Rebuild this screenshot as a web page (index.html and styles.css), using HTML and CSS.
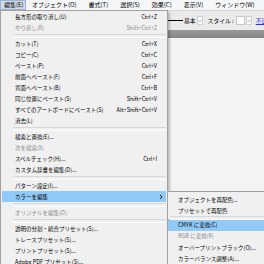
FILE: index.html
```html
<!DOCTYPE html>
<html lang="ja">
<head>
<meta charset="utf-8">
<link rel="stylesheet" href="styles.css">
</head>
<body>
<div class="app">
  <nav class="menubar">
    <span class="mb-item open">編集(E)</span>
    <span class="mb-item">オブジェクト(O)</span>
    <span class="mb-item">書式(T)</span>
    <span class="mb-item">選択(S)</span>
    <span class="mb-item">効果(C)</span>
    <span class="mb-item">表示(V)</span>
    <span class="mb-item">ウィンドウ(W)</span>
  </nav>
  <div class="toolbar">
    <div class="tb-controls">
      <span class="stroke-line"></span>
      <span class="tb-label">基本</span>
      <span class="dd-btn"><svg viewBox="0 0 6 6" width="6" height="6"><path d="M1.5 2.2 L3 3.8 L4.5 2.2" fill="none" stroke="#333" stroke-width="0.8"/></svg></span>
      <span class="tb-label style-label">スタイル :</span>
      <span class="style-box"></span>
      <span class="dd-btn"><svg viewBox="0 0 6 6" width="6" height="6"><path d="M1.5 2.2 L3 3.8 L4.5 2.2" fill="none" stroke="#333" stroke-width="0.8"/></svg></span>
      <a class="tb-link">不透明度</a>
    </div>
  </div>
  <div class="tabbar"></div>
  <div class="canvas"></div>

  <div class="menu main-menu">
    <div class="row"><span class="label">長方形の取り消し(U)</span><span class="key">Ctrl+Z</span></div>
    <div class="row disabled"><span class="label">やり直し(R)</span><span class="key">Shift+Ctrl+Z</span></div>
    <div class="sep"></div>
    <div class="row"><span class="label">カット(T)</span><span class="key">Ctrl+X</span></div>
    <div class="row"><span class="label">コピー(C)</span><span class="key">Ctrl+C</span></div>
    <div class="row"><span class="label">ペースト(P)</span><span class="key">Ctrl+V</span></div>
    <div class="row"><span class="label">前面へペースト(F)</span><span class="key">Ctrl+F</span></div>
    <div class="row"><span class="label">背面へペースト(B)</span><span class="key">Ctrl+B</span></div>
    <div class="row"><span class="label">同じ位置にペースト(S)</span><span class="key">Shift+Ctrl+V</span></div>
    <div class="row"><span class="label">すべてのアートボードにペースト(S)</span><span class="key">Alt+Shift+Ctrl+V</span></div>
    <div class="row"><span class="label">消去(L)</span></div>
    <div class="sep"></div>
    <div class="row"><span class="label">検索と置換(E)...</span></div>
    <div class="row disabled"><span class="label">次を検索(X)</span></div>
    <div class="row"><span class="label">スペルチェック(H)...</span><span class="key">Ctrl+I</span></div>
    <div class="row"><span class="label">カスタム辞書を編集(D)...</span></div>
    <div class="sep"></div>
    <div class="row"><span class="label">パターン設定(I)...</span></div>
    <div class="row hl"><span class="label">カラーを編集</span><span class="arrow"><svg viewBox="0 0 4 6" width="4" height="6"><path d="M1 1 L3 3 L1 5" fill="none" stroke="#222" stroke-width="1"/></svg></span></div>
    <div class="sep"></div>
    <div class="row disabled"><span class="label">オリジナルを編集(O)</span></div>
    <div class="sep"></div>
    <div class="row"><span class="label">透明の分割・統合プリセット(S)...</span></div>
    <div class="row"><span class="label">トレースプリセット(S)...</span></div>
    <div class="row"><span class="label">プリントプリセット(S)...</span></div>
    <div class="row"><span class="label">Adobe PDF プリセット(S)...</span></div>
  </div>

  <div class="menu sub-menu">
    <div class="row"><span class="label">オブジェクトを再配色...</span></div>
    <div class="row"><span class="label">プリセットで再配色</span></div>
    <div class="sep"></div>
    <div class="row hl"><span class="label">CMYK に変換(C)</span></div>
    <div class="row disabled"><span class="label">RGB に変換(R)</span></div>
    <div class="row"><span class="label">オーバープリントブラック(O)...</span></div>
    <div class="row"><span class="label">カラーバランス調整(A)...</span></div>
  </div>
</div>
</body>
</html>
```
FILE: styles.css
```css
* { box-sizing: border-box; margin: 0; padding: 0; }
html, body { width: 264px; height: 264px; overflow: hidden; }
body {
  font-family: "Noto Sans CJK JP", "Noto Sans", sans-serif;
  color: #000;
  background: #f3f3f3;
}
.app {
  position: relative;
  width: 264px;
  height: 264px;
  display: grid;
  grid-template-rows: 10px 20px 8px 1fr;
  overflow: hidden;
}
.menubar {
  display: flex;
  background: #f5f6f7;
  font-size: 6px;
  line-height: 10px;
  white-space: nowrap;
}
.mb-item { padding: 0 6px; }
.mb-item.open {
  width: 26px;
  padding: 0 3px;
  background: #d3dde9;
  border: 1px solid #9fb3cc;
  line-height: 8px;
}
.toolbar {
  background: #ebebeb;
  border-top: 1px solid #d6d6d6;
  display: flex;
  align-items: center;
  overflow: hidden;
  white-space: nowrap;
  font-size: 5.8px;
}
.tb-controls {
  margin-left: 168px;
  display: flex;
  align-items: center;
}
.stroke-line {
  width: 15px;
  height: 1.5px;
  background: #000;
  margin-right: 1px;
}
.tb-label { line-height: 10px; }
.style-label { margin-left: 5px; margin-right: 2px; }
.dd-btn {
  width: 6px;
  height: 9px;
  display: flex;
  align-items: center;
  justify-content: center;
  background: #fafafa;
  border: 1px solid #cfcfcf;
  margin-left: 1px;
}
.style-box {
  width: 9px;
  height: 9px;
  background: #fff;
  border: 1px solid #c8c8c8;
}
.tb-link {
  margin-left: 4px;
  color: #2233ee;
  text-decoration: underline;
}
.tabbar { background: linear-gradient(#9a9a9a, #868686); }
.canvas { background: #f3f3f3; }

.menu {
  position: absolute;
  background: #f0f0f0;
  border: 1px solid #a0a0a0;
  font-size: 5.5px;
  box-shadow: 2px 2px 2px rgba(0, 0, 0, 0.22);
  white-space: nowrap;
}
.main-menu {
  top: 10px;
  left: 0;
  width: 168px;
  height: 262px;
  overflow: hidden;
}
.row {
  display: flex;
  align-items: center;
  height: 11px;
  padding: 0 10px 0 14px;
}
.row .label { flex: 1; }
.row.disabled { color: #8c8c8c; }
.row.hl {
  background: #91c9f7;
  margin: 0 1px;
  padding-left: 13px;
  padding-right: 9px;
}
.arrow {
  display: flex;
  margin-right: -6px;
}
.sep {
  height: 5px;
  display: flex;
  align-items: center;
  padding-left: 12px;
  padding-right: 1px;
}
.sep::before {
  content: "";
  flex: 1;
  height: 2px;
  border-top: 1px solid #d7d7d7;
  border-bottom: 1px solid #fff;
}
.sub-menu {
  top: 191px;
  left: 167px;
  width: 120px;
  padding: 2px 0;
}
.sub-menu .row { height: 11.5px; padding-left: 10px; }
.sub-menu .row.hl { margin: 0; padding-left: 10px; }
.sub-menu .sep { height: 2px; padding-left: 2px; }
```
